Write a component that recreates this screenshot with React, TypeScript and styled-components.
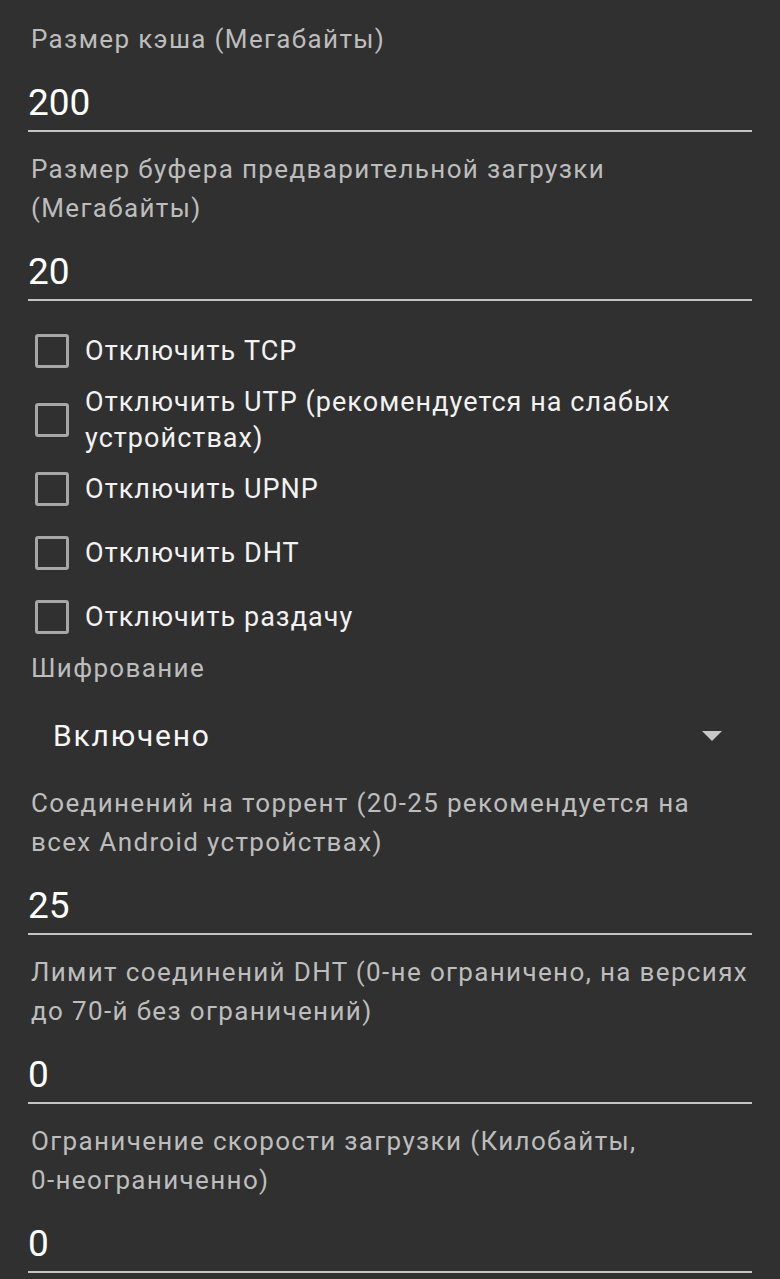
import React from "react";
import styled, { createGlobalStyle } from "styled-components";

const Global = createGlobalStyle`
  html, body { margin: 0; padding: 0; background: #303030; }
  body { font-family: Roboto, "Noto Sans", sans-serif; -webkit-font-smoothing: antialiased; }
`;

const Page = styled.div`
  width: 780px;
  height: 1279px;
  overflow: hidden;
  background: #303030;
  padding: 19.5px 28px 0 28px;
  box-sizing: border-box;
  display: flex;
  flex-direction: column;
  & > * {
    flex: none;
  }
`;

const Field = styled.div`
  display: flex;
  flex-direction: column;
  margin-bottom: 17.5px;
`;

const Label = styled.div`
  font-size: 26px;
  line-height: 39px;
  letter-spacing: 1.35px;
  color: #bdbdbd;
  padding-left: 3px;
`;

const NoWrap = styled.span`
  white-space: nowrap;
`;

const InputBox = styled.div`
  height: 71.5px;
  box-sizing: content-box;
  border-bottom: 2px solid #c4c4c4;
  display: flex;
  align-items: flex-end;
`;

const Value = styled.span`
  font-size: 37px;
  line-height: 47px;
  color: #ffffff;
  padding-bottom: 4.5px;
`;

const CheckList = styled.div`
  display: flex;
  flex-direction: column;
`;

const CheckRow = styled.label`
  display: flex;
  align-items: center;
  min-height: 64px;
  padding-left: 7px;
`;

const Box = styled.span`
  flex: none;
  width: 28px;
  height: 28px;
  border: 3px solid #a6a6a6;
  border-radius: 3px;
  margin-right: 16px;
`;

const CheckText = styled.span`
  font-size: 27px;
  line-height: 36px;
  letter-spacing: 1.05px;
  color: #f2f2f2;
  padding: 1px 0;
`;

const Spinner = styled.div`
  height: 96px;
  display: flex;
  align-items: center;
  justify-content: space-between;
  padding: 0 30px 0 25px;
`;

const SpinnerText = styled.span`
  font-size: 30px;
  letter-spacing: 1.8px;
  color: #f5f5f5;
`;

const Arrow = styled.svg`
  width: 20px;
  height: 10px;
`;

type F = { label: React.ReactNode; value: string };

const fields1: F[] = [
  { label: "Размер кэша (Мегабайты)", value: "200" },
  { label: "Размер буфера предварительной загрузки (Мегабайты)", value: "20" },
];

const checks = [
  "Отключить TCP",
  "Отключить UTP (рекомендуется на слабых устройствах)",
  "Отключить UPNP",
  "Отключить DHT",
  "Отключить раздачу",
];

const fields2: F[] = [
  { label: "Соединений на торрент (20-25 рекомендуется на всех Android устройствах)", value: "25" },
  { label: "Лимит соединений DHT (0-не ограничено, на версиях до 70-й без ограничений)", value: "0" },
  {
    label: (
      <>
        Ограничение скорости загрузки (Килобайты, <NoWrap>0-неограниченно)</NoWrap>
      </>
    ),
    value: "0",
  },
];

const InputField = ({ label, value }: F) => (
  <Field>
    <Label>{label}</Label>
    <InputBox>
      <Value>{value}</Value>
    </InputBox>
  </Field>
);

export default function App() {
  return (
    <>
      <Global />
      <Page>
        {fields1.map((f, i) => (
          <InputField key={i} {...f} />
        ))}
        <CheckList>
          {checks.map((c) => (
            <CheckRow key={c}>
              <Box />
              <CheckText>{c}</CheckText>
            </CheckRow>
          ))}
        </CheckList>
        <Label>Шифрование</Label>
        <Spinner>
          <SpinnerText>Включено</SpinnerText>
          <Arrow viewBox="0 0 20 10">
            <path d="M0 0 L20 0 L10 10 Z" fill="#c8c8c8" />
          </Arrow>
        </Spinner>
        {fields2.map((f, i) => (
          <InputField key={i} {...f} />
        ))}
      </Page>
    </>
  );
}
